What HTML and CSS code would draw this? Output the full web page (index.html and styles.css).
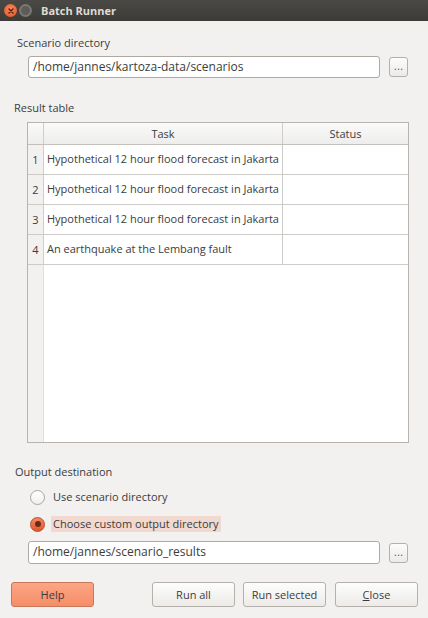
FILE: index.html
```html
<!DOCTYPE html>
<html>
<head>
<meta charset="utf-8">
<link rel="stylesheet" href="styles.css">
</head>
<body>
<div class="window">
  <div class="titlebar">
    <span class="wbtn close"><svg width="12" height="12" viewBox="0 0 12 12"><path d="M4 4L8 8M8 4L4 8" stroke="#5a1a08" stroke-width="1.4" stroke-linecap="round"/></svg></span>
    <span class="wbtn min"></span>
    <span class="title">Batch Runner</span>
  </div>
  <div class="content">
    <div class="label scen-label">Scenario directory</div>
    <div class="path-row">
      <div class="field">/home/jannes/kartoza-data/scenarios</div>
      <button class="dots">...</button>
    </div>
    <div class="label result-label">Result table</div>
    <div class="table">
      <div class="thead">
        <div class="corner"></div>
        <div class="th task">Task</div>
        <div class="th status">Status</div>
      </div>
      <div class="tr"><div class="num">1</div><div class="td task">Hypothetical 12 hour flood forecast in Jakarta</div><div class="td status"></div></div>
      <div class="tr"><div class="num">2</div><div class="td task">Hypothetical 12 hour flood forecast in Jakarta</div><div class="td status"></div></div>
      <div class="tr"><div class="num">3</div><div class="td task">Hypothetical 12 hour flood forecast in Jakarta</div><div class="td status"></div></div>
      <div class="tr"><div class="num">4</div><div class="td task">An earthquake at the Lembang fault</div><div class="td status"></div></div>
      <div class="filler"><div class="filler-side"></div><div class="filler-main"></div></div>
    </div>
    <div class="label out-label">Output destination</div>
    <div class="radio-row"><span class="radio"></span><span class="rlabel">Use scenario directory</span></div>
    <div class="radio-row checked"><span class="radio on"><span class="dot"></span></span><span class="rlabel hl">Choose custom output directory</span></div>
    <div class="path-row out-path">
      <div class="field">/home/jannes/scenario_results</div>
      <button class="dots">...</button>
    </div>
    <div class="buttons">
      <button class="btn help">Help</button>
      <div class="spacer"></div>
      <button class="btn runall">Run all</button>
      <button class="btn runsel">Run selected</button>
      <button class="btn closeb"><u>C</u>lose</button>
    </div>
  </div>
</div>
</body>
</html>
```
FILE: styles.css
```css
* { box-sizing: border-box; }
html, body { margin: 0; padding: 0; }
body {
  width: 428px; height: 618px; overflow: hidden;
  background: #f2f1f0;
  font-family: "Open Sans", "DejaVu Sans", sans-serif;
  font-size: 11px;
  color: #3c3c3c;
}
.window { width: 428px; height: 618px; display: flex; flex-direction: column; }
.titlebar {
  height: 21px;
  background: linear-gradient(#4a4945, #3c3b37);
  display: flex; align-items: center;
  padding-left: 4px;
}
.wbtn { width: 13px; height: 13px; border-radius: 50%; display: inline-flex; align-items: center; justify-content: center; }
.wbtn.close { background: radial-gradient(circle at 50% 40%, #f68b63, #e2501f); }
.wbtn.min { margin-left: 2px; background: #5d5c58; border: 2px solid #7a7873; width: 13px; height: 13px; }
.title { margin-left: 9px; color: #dfdbd2; font-weight: bold; font-size: 11px; }
.content { flex: 1; display: flex; flex-direction: column; }
.label { font-size: 11px; color: #3c3c3c; line-height: 16px; }
.scen-label { margin: 14px 0 0 17px; }
.path-row { display: flex; align-items: center; margin-left: 28px; }
.scen-label + .path-row { margin-top: 5px; }
.field {
  width: 352px; height: 22px;
  background: #fff;
  border: 1px solid #aea9a3;
  border-radius: 3px;
  padding: 0 4px;
  line-height: 20px;
  font-size: 12px;
  color: #3c3c3c;
  white-space: nowrap; overflow: hidden;
}
.dots {
  margin-left: 9px;
  width: 19px; height: 20px;
  border: 1px solid #b5b0aa;
  border-radius: 3px;
  background: linear-gradient(#fcfcfc, #eceae8);
  font: 10px "DejaVu Sans", sans-serif; color: #555;
  padding: 0; line-height: 18px;
}
.result-label { margin: 22px 0 0 14px; }
.table {
  margin: 6px 0 0 27px;
  width: 382px; height: 321px;
  border: 1px solid #b7b3ae;
  display: flex; flex-direction: column;
  background: #fff;
}
.thead { display: flex; height: 22px; background: linear-gradient(#fafafa, #eeedec); border-bottom: 1px solid #c3c0bc; }
.corner { width: 16px; border-right: 1px solid #d0cdca; }
.th { text-align: center; line-height: 21px; color: #3c3c3c; }
.th.task { width: 239px; border-right: 1px solid #d0cdca; }
.th.status { flex: 1; }
.tr { display: flex; height: 30px; border-bottom: 1px solid #cdcbc8; }
.num { width: 16px; background: #f2f1f0; border-right: 1px solid #d0cdca; text-align: center; line-height: 29px; }
.td { line-height: 28px; }
.td.task { width: 239px; border-right: 1px solid #cdcbc8; padding-left: 3px; white-space: nowrap; overflow: hidden; }
.td.status { flex: 1; }
.filler { flex: 1; display: flex; }
.filler-side { width: 16px; background: #f2f1f0; border-right: 1px solid #e0dedb; }
.filler-main { flex: 1; }
.out-label { margin: 21px 0 0 15px; }
.radio-row { display: flex; align-items: center; margin-left: 30px; height: 18px; }
.out-label + .radio-row { margin-top: 8px; }
.radio-row.checked { margin-top: 9px; }
.radio {
  width: 15px; height: 15px; border-radius: 50%;
  border: 1px solid #a8a49f;
  background: linear-gradient(#fff, #f0efee);
  display: inline-flex; align-items: center; justify-content: center;
}
.radio.on { background: linear-gradient(#f3876a, #e0582c); border-color: #c04a24; }
.radio .dot { width: 6px; height: 6px; border-radius: 50%; background: #6b2a15; }
.rlabel { margin-left: 8px; line-height: 16px; }
.rlabel.hl { background: #f1d9cf; margin-left: 6px; padding: 0 2px; }
.out-path { margin-top: 8px; }
.out-path .field { height: 23px; }
.buttons { display: flex; margin: 18px 0 0 11px; align-items: center; }
.btn {
  height: 25px;
  border: 1px solid #b5b0aa;
  border-radius: 3px;
  background: linear-gradient(#fdfdfd, #ecebe9);
  font-family: "Open Sans", "DejaVu Sans", sans-serif;
  font-size: 11px; color: #3c3c3c;
  padding: 0;
}
.btn.help { width: 83px; background: linear-gradient(#fca585, #f58e67); border-color: #c9775a; }
.spacer { width: 58px; }
.btn.runall { width: 83px; }
.btn.runsel { width: 83px; margin-left: 8px; }
.btn.closeb { width: 83px; margin-left: 9px; }
```
